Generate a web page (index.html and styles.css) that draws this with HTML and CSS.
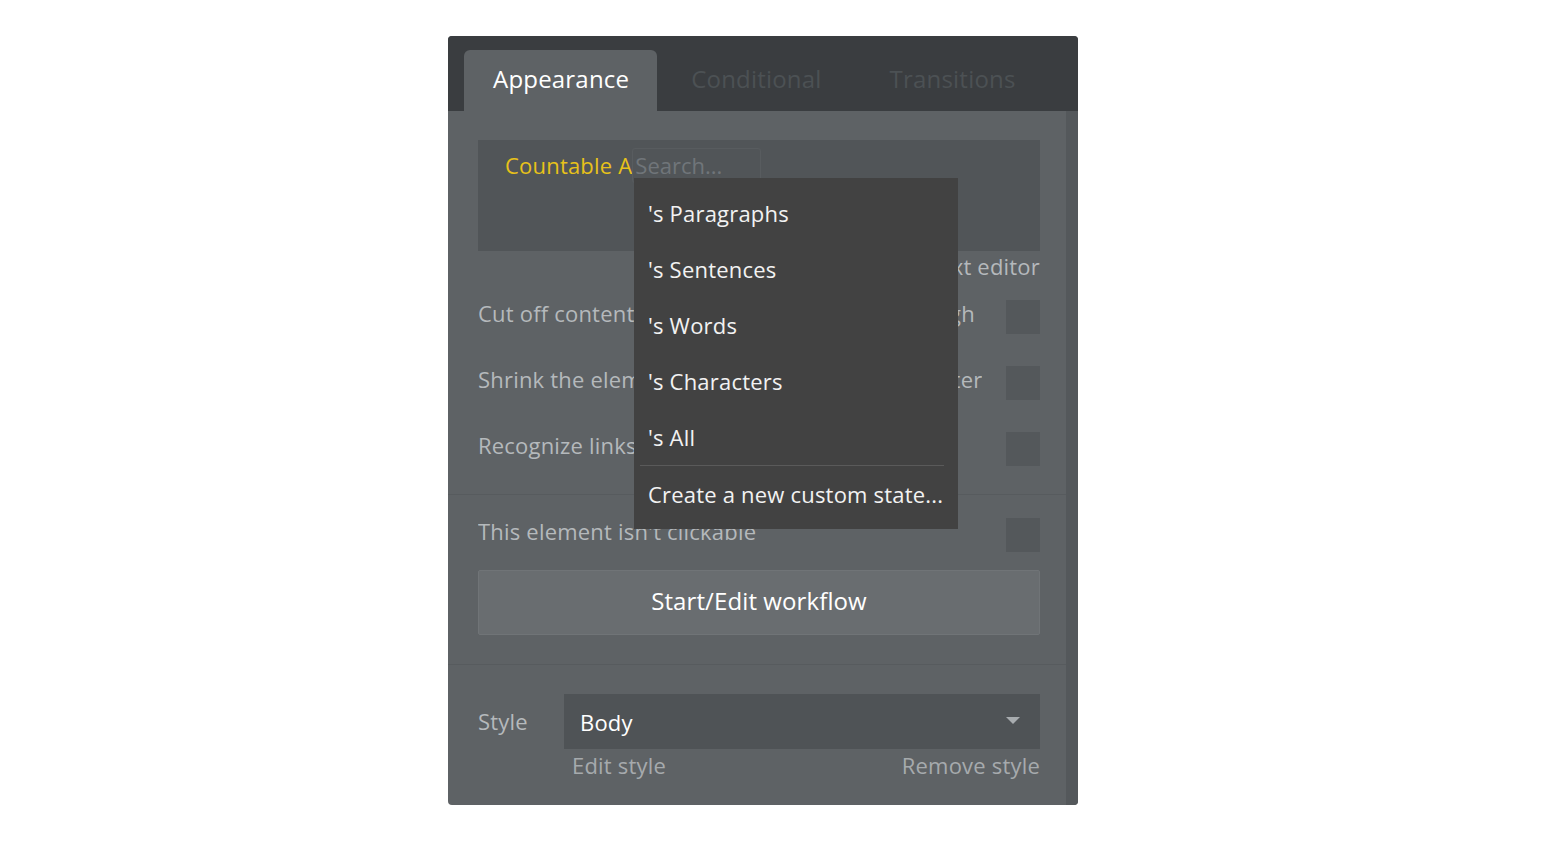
FILE: index.html
```html
<!DOCTYPE html>
<html lang="en">
<head>
    <meta charset="UTF-8">
    <title>Text properties</title>
    <link rel="stylesheet" href="styles.css">
</head>
<body>
    <div class="panel">
        <div class="tabs">
            <div class="tab active">Appearance</div>
            <div class="tab">Conditional</div>
            <div class="tab">Transitions</div>
        </div>
        <div class="panel-body">
            <div class="content">
                <section class="section first">
                    <div class="expr-box">
                        <span class="expr">Countable A</span><input class="search" type="text" placeholder="Search...">
                    </div>
                    <div class="hint">Use the rich text editor</div>
                    <div class="check-row">
                        <span class="label">Cut off content if this element isn't high enough</span>
                        <span class="checkbox"></span>
                    </div>
                    <div class="check-row">
                        <span class="label">Shrink the element's height if that text is shorter</span>
                        <span class="checkbox"></span>
                    </div>
                    <div class="check-row">
                        <span class="label">Recognize links and emails</span>
                        <span class="checkbox"></span>
                    </div>
                </section>
                <section class="section">
                    <div class="check-row">
                        <span class="label">This element isn't clickable</span>
                        <span class="checkbox"></span>
                    </div>
                    <div class="workflow-btn">Start/Edit workflow</div>
                </section>
                <section class="section style-section">
                    <div class="style-row">
                        <span class="label">Style</span>
                        <div class="select">
                            <span>Body</span>
                            <svg class="caret" width="14" height="8" viewBox="0 0 14 8"><path d="M0 0 H14 L7 7 Z" fill="#a8acaf"/></svg>
                        </div>
                    </div>
                    <div class="style-links">
                        <span>Edit style</span>
                        <span>Remove style</span>
                    </div>
                </section>
            </div>
            <div class="scrollbar"></div>

            <ul class="menu">
                <li>'s Paragraphs</li>
                <li>'s Sentences</li>
                <li>'s Words</li>
                <li>'s Characters</li>
                <li>'s All</li>
                <li class="sep"></li>
                <li>Create a new custom state...</li>
            </ul>
        </div>
    </div>
</body>
</html>
```

FILE: styles.css
```css
body {
    margin: 0;
    background-color: #ffffff;
    font-family: "Open Sans", "DejaVu Sans", sans-serif;
}
.panel {
    width: 630px;
    height: 769px;
    margin: 36px 0 0 448px;
    border-radius: 4px;
    overflow: hidden;
    background-color: #5e6265;
    display: flex;
    flex-direction: column;
}
.tabs {
    height: 75px;
    background-color: #3a3d40;
    display: flex;
    align-items: flex-end;
    padding-left: 16px;
    box-sizing: border-box;
}
.tab {
    height: 61px;
    line-height: 58px;
    font-size: 24px;
    letter-spacing: 0.2px;
    color: #4c5154;
    padding: 0 34px;
}
.tab.active {
    background-color: #5e6265;
    color: #ffffff;
    border-radius: 6px 6px 0 0;
    padding: 0 28px 0 29px;
}
.panel-body {
    flex: 1;
    display: flex;
    position: relative;
}
.content {
    flex: 1;
    overflow: hidden;
}
.scrollbar {
    width: 12px;
    background-color: #54585b;
}
.section {
    padding: 23px 26px 29px 30px;
    border-top: 1px solid #575b5e;
}
.section.first {
    border-top: none;
    padding-top: 29px;
    padding-bottom: 28px;
}
.expr-box {
    height: 111px;
    background-color: #515558;
    padding: 8px 0 0 27px;
    box-sizing: border-box;
    display: flex;
    align-items: flex-start;
}
.expr {
    color: #e8c21a;
    font-size: 22px;
    line-height: 34px;
    letter-spacing: 0.2px;
}
.search {
    width: 129px;
    height: 35px;
    box-sizing: border-box;
    border: 1px solid #585c5f;
    border-radius: 3px;
    background: transparent;
    font-family: inherit;
    font-size: 22px;
    padding: 0 2px 2px 2px;
    color: #c8c8c8;
    outline: none;
}
.search::placeholder {
    color: #70757a;
}
.hint {
    text-align: right;
    font-size: 22px;
    letter-spacing: 0.2px;
    line-height: 30px;
    color: #b5b9bc;
}
.check-row {
    display: flex;
    align-items: center;
    justify-content: space-between;
    height: 34px;
    margin-top: 32px;
}
.hint + .check-row {
    margin-top: 19px;
}
.section:not(.first) .check-row {
    margin-top: 0;
}
.label {
    font-size: 22px;
    letter-spacing: 0.2px;
    color: #b5b9bc;
    white-space: nowrap;
}
.check-row .label {
    min-width: 0;
    overflow: hidden;
    margin-bottom: 9px;
}
.checkbox {
    flex: none;
    width: 34px;
    height: 34px;
    margin-left: 18px;
    background-color: #54585b;
}
.workflow-btn {
    margin-top: 18px;
    height: 65px;
    box-sizing: border-box;
    border: 1px solid #707477;
    border-radius: 2px;
    background-color: #696d70;
    color: #ffffff;
    font-size: 24px;
    letter-spacing: 0.1px;
    line-height: 60px;
    text-align: center;
}
.style-section {
    padding-top: 29px;
    padding-bottom: 18px;
}
.style-row {
    display: flex;
    align-items: center;
}
.style-row .label {
    width: 86px;
    margin-bottom: 2px;
}
.select {
    flex: 1;
    height: 55px;
    background-color: #4f5356;
    display: flex;
    align-items: center;
    justify-content: space-between;
    padding: 0 20px 0 16px;
    box-sizing: border-box;
    color: #ffffff;
    font-size: 22px;
    letter-spacing: 0.2px;
}
.caret {
    margin-top: -2px;
}
.style-links {
    display: flex;
    justify-content: space-between;
    padding-left: 94px;
    font-size: 22px;
    letter-spacing: 0.2px;
    line-height: 24px;
    color: #a6aaad;
    margin-top: 4px;
}
.menu {
    position: absolute;
    left: 186px;
    top: 67px;
    width: 324px;
    margin: 0;
    padding: 7px 0 7px 0;
    list-style: none;
    background-color: #424242;
    box-sizing: border-box;
}
.menu li {
    height: 56px;
    line-height: 56px;
    padding-left: 14px;
    font-size: 22px;
    color: #f2f2f2;
    letter-spacing: 0.2px;
    white-space: nowrap;
}
.menu li.sep {
    height: 1px;
    margin: 0 14px 0 6px;
    padding: 0;
    background-color: #5a5a5a;
}
```
